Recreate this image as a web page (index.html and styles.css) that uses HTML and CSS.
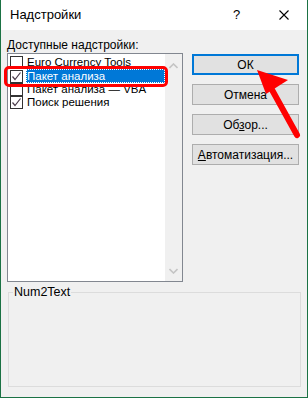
FILE: index.html
```html
<!DOCTYPE html>
<html lang="ru">

<head>
    <meta charset="UTF-8">
    <title>Надстройки</title>
    <link rel="stylesheet" href="styles.css">
</head>

<body>
    <div class="window">
        <div class="titlebar">
            <span class="title">Надстройки</span>
            <span class="help">?</span>
            <span class="close">
                <svg width="10" height="10" viewBox="0 0 10 10"><path d="M0.5 0.5 L9.5 9.5 M9.5 0.5 L0.5 9.5" stroke="#000" stroke-width="1.1"/></svg>
            </span>
        </div>

        <div class="content">
            <div class="top">
                <div class="left">
                    <div class="label"><u>Д</u>оступные надстройки:</div>
                    <div class="list">
                        <div class="items">
                            <div class="item first">
                                <span class="check"></span>
                                <span class="name">Euro Currency Tools</span>
                            </div>
                            <div class="item selected">
                                <span class="check on">
                                    <svg width="11" height="11" viewBox="0 0 11 11"><path d="M1.5 5.5 L4 8.5 L9.5 1.5" fill="none" stroke="#4a3b4a" stroke-width="1.2"/></svg>
                                </span>
                                <span class="name">Пакет анализа</span>
                            </div>
                            <div class="item">
                                <span class="check"></span>
                                <span class="name">Пакет анализа — VBA</span>
                            </div>
                            <div class="item">
                                <span class="check on">
                                    <svg width="11" height="11" viewBox="0 0 11 11"><path d="M1.5 5.5 L4 8.5 L9.5 1.5" fill="none" stroke="#4a3b4a" stroke-width="1.2"/></svg>
                                </span>
                                <span class="name">Поиск решения</span>
                            </div>
                        </div>
                        <div class="scrollbar">
                            <svg width="9" height="6" viewBox="0 0 9 6"><path d="M0.5 5 L4.5 1 L8.5 5" fill="none" stroke="#c4c4c4" stroke-width="1.6"/></svg>
                            <svg width="9" height="6" viewBox="0 0 9 6"><path d="M0.5 1 L4.5 5 L8.5 1" fill="none" stroke="#c4c4c4" stroke-width="1.6"/></svg>
                        </div>
                    </div>
                </div>

                <div class="buttons">
                    <button class="btn default">ОК</button>
                    <button class="btn">Отмена</button>
                    <button class="btn">Об<u>з</u>ор...</button>
                    <button class="btn"><u>А</u>втоматизация...</button>
                </div>
            </div>

            <fieldset class="group">
                <legend>Num2Text</legend>
            </fieldset>
        </div>

        <div class="highlight"></div>
        <svg class="arrow" width="308" height="398" viewBox="0 0 308 398">
            <path d="M296 135 L270 88" stroke="#ff0000" stroke-width="6" stroke-linecap="round"/>
            <polygon points="256,70 287,80 265,94" fill="#ff0000"/>
        </svg>
    </div>
</body>

</html>
```

FILE: styles.css
```css
body {
    margin: 0;
    padding: 0;
    font-family: "Liberation Sans", Arial, sans-serif;
    font-size: 12px;
    color: #000;
}

.window {
    position: relative;
    width: 308px;
    height: 398px;
    box-sizing: border-box;
    border: 1px solid #1b7244;
    border-top: none;
    background: #f0f0f0;
    display: flex;
    flex-direction: column;
    overflow: hidden;
}

.titlebar {
    height: 30px;
    background: #fff;
    display: flex;
    align-items: center;
    padding-left: 9px;
    padding-bottom: 1px;
    box-sizing: border-box;
}

.title {
    flex: 1;
    font-size: 13px;
}

.help {
    width: 8px;
    margin-right: 38px;
    font-size: 13px;
}

.close {
    width: 10px;
    margin-right: 18px;
    display: flex;
    align-items: center;
}

.content {
    flex: 1;
    padding: 8px 6px 10px 6px;
    display: flex;
    flex-direction: column;
}

.top {
    display: flex;
    gap: 9px;
}

.left {
    width: 176px;
}

.label {
    height: 15px;
    line-height: 14px;
}

.label u,
.btn u {
    text-decoration: underline;
    text-underline-offset: 1px;
}

.list {
    height: 229px;
    background: #fff;
    border: 1px solid #828790;
    box-sizing: border-box;
    display: flex;
    overflow: hidden;
    font-size: 11.5px;
}

.items {
    flex: 1;
    padding-left: 2px;
}

.item {
    height: 13px;
    display: flex;
    align-items: center;
    gap: 3px;
}

.item.first {
    margin-top: 2px;
}

.check {
    width: 13px;
    height: 13px;
    box-sizing: border-box;
    border: 1px solid #333;
    background: #fff;
    display: flex;
    align-items: center;
    justify-content: center;
    flex-shrink: 0;
}

.item.selected .check {
    outline: 1px dotted #333;
    outline-offset: -1px;
}

.name {
    line-height: 13px;
    padding-left: 1px;
}

.item.selected {
    height: 14px;
}

.item.selected .name {
    flex: 1;
    background: #0078d7;
    color: #fff;
    height: 14px;
    line-height: 14px;
    outline: 1px dotted #fff;
    outline-offset: -1px;
}

.scrollbar {
    width: 17px;
    background: #f0f0f0;
    display: flex;
    flex-direction: column;
    justify-content: space-between;
    align-items: center;
    padding: 9px 0 7px;
}

.buttons {
    width: 107px;
    padding-top: 16px;
    display: flex;
    flex-direction: column;
    gap: 9px;
}

.btn {
    height: 21px;
    font-family: inherit;
    font-size: 12px;
    background: #e1e1e1;
    border: 1px solid #adadad;
    padding: 0;
    color: #000;
}

.btn.default {
    border: 2px solid #0078d7;
}

.group {
    margin: 3px 0 0 1px;
    padding: 0;
    border: 1px solid #dcdcdc;
    flex: 1;
}

.group legend {
    padding: 0 1px;
    margin-left: 4px;
    font-size: 12.5px;
}

.highlight {
    position: absolute;
    left: 3px;
    top: 66px;
    width: 158px;
    height: 15px;
    border: 3px solid #ff0000;
    border-radius: 5px;
}

.arrow {
    position: absolute;
    left: 0;
    top: 0;
    pointer-events: none;
}
```
